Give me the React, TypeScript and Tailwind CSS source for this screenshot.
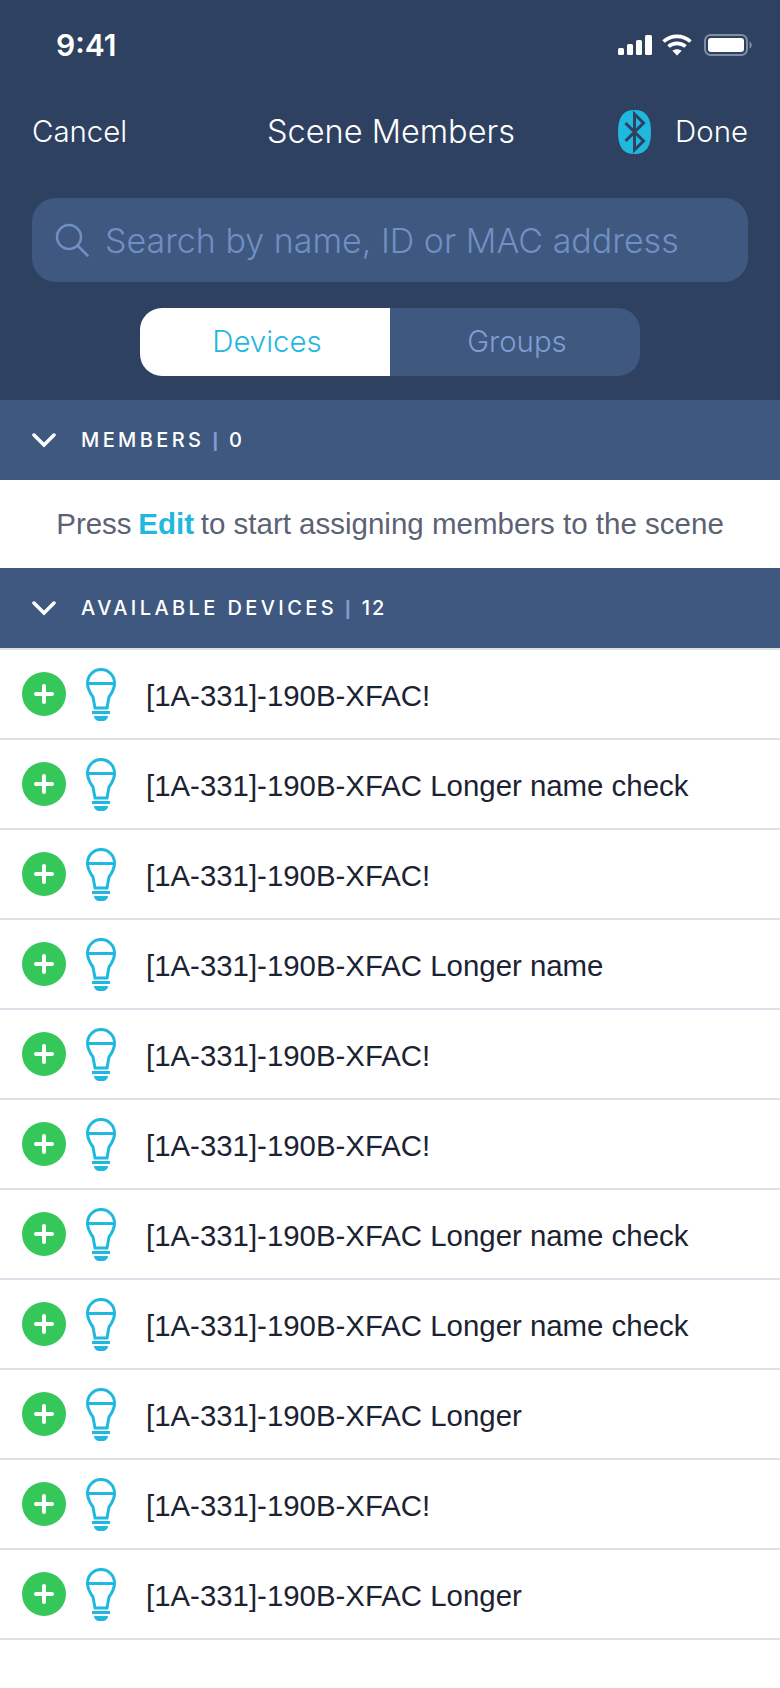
const devices = [
  "[1A-331]-190B-XFAC!",
  "[1A-331]-190B-XFAC Longer name check",
  "[1A-331]-190B-XFAC!",
  "[1A-331]-190B-XFAC Longer name",
  "[1A-331]-190B-XFAC!",
  "[1A-331]-190B-XFAC!",
  "[1A-331]-190B-XFAC Longer name check",
  "[1A-331]-190B-XFAC Longer name check",
  "[1A-331]-190B-XFAC Longer",
  "[1A-331]-190B-XFAC!",
  "[1A-331]-190B-XFAC Longer",
];

function StatusIcons() {
  return (
    <div className="-mr-[4px] flex items-center">
      <svg width="34" height="20" viewBox="0 0 34 20" fill="#fff">
        <rect x="0" y="13" width="6" height="7" rx="1.5" />
        <rect x="9" y="9" width="6" height="11" rx="1.5" />
        <rect x="18" y="5" width="6" height="15" rx="1.5" />
        <rect x="27" y="0" width="7" height="20" rx="1.5" />
      </svg>
      <svg className="ml-[10px]" width="30" height="22" viewBox="0 0 30 22" fill="none" stroke="#fff" strokeWidth="3.6">
        <path d="M1.500 7.500C9 .6 21 .6 28.500 7.500" />
        <path d="M6.500 12.500c4.600-4.200 12.400-4.200 17 0" />
        <path d="M15 21.500l-4.600-4.800c2.600-2 6.600-2 9.200 0z" fill="#fff" stroke="none" />
      </svg>
      <svg className="ml-[12px]" width="48" height="22" viewBox="0 0 48 22" fill="none">
        <rect x="1" y="1" width="42" height="20" rx="5.500" stroke="#fff" strokeOpacity="0.4" strokeWidth="2" />
        <rect x="4" y="4" width="36" height="14" rx="3" fill="#fff" />
        <path d="M45.500 7.500c1.400.5 2.300 2 2.300 3.500s-.9 3-2.300 3.500z" fill="#fff" fillOpacity="0.4" />
      </svg>
    </div>
  );
}

function BluetoothBadge() {
  return (
    <svg width="33" height="44" viewBox="0 0 33 44">
      <path d="M16.500 0C28 0 33 7 33 22s-5 22-16.500 22S0 37 0 22 5 0 16.500 0z" fill="#1fb8de" />
      <path d="M7.500 13l18 18-9 9V4l9 9-18 18" fill="none" stroke="#2e4161" strokeWidth="3" />
    </svg>
  );
}

function SectionBar({ title, count }: { title: string; count: number }) {
  return (
    <div className="flex h-20 items-center bg-[#3f587f] pl-[32px] text-white">
      <svg width="24" height="16" viewBox="0 0 24 16" fill="none" stroke="#fff" strokeWidth="3.500" strokeLinecap="round">
        <path d="M2 3l10 10L22 3" />
      </svg>
      <span className="ml-[25px] text-[20px] font-medium tracking-[0.17em]">{title}</span>
      <span className="ml-[8px] font-['Liberation_Sans',sans-serif] text-[20px] font-bold text-[#7d9ed2]">|</span>
      <span className="ml-[11px] text-[20px] font-medium tracking-[0.1em]">{count}</span>
    </div>
  );
}

function DeviceRow({ name }: { name: string }) {
  return (
    <div className="flex h-[90px] items-center border-b-2 border-[#dde2ea] pl-[22px]">
      <div className="flex h-11 w-11 items-center justify-center rounded-full bg-[#35c759]">
        <svg width="22" height="22" viewBox="0 0 22 22" stroke="#fff" strokeWidth="4" strokeLinecap="round">
          <path d="M11 3v16M3 11h16" />
        </svg>
      </div>
      <svg className="ml-[20px]" width="30" height="53" viewBox="0 0 30 53" fill="none" stroke="#1fb8de" strokeWidth="3">
        <path d="M9 40L7 29C4 25 1.500 21 1.500 15 1.500 7.500 7.500 1.500 15 1.500S28.500 7.500 28.500 15c0 6-2.500 10-5.500 14l-2 11z" />
        <path d="M3 15.500h24" />
        <path d="M6 44.500h18" />
        <path d="M8 48h14c0 2.800-2.500 5-5 5h-4c-2.500 0-5-2.200-5-5z" fill="#1fb8de" stroke="none" />
      </svg>
      <span className="ml-[30px] mt-[4px] font-['Liberation_Sans',sans-serif] text-[29.4px] text-[#1b2333]">{name}</span>
    </div>
  );
}

export default function App() {
  return (
    <div className="min-h-[1688px] bg-white font-['Inter',sans-serif]">
      <header className="h-[400px] bg-[#2e4161] px-[32px] text-white">
        <div className="flex h-[90px] items-center justify-between pl-[24px]">
          <span className="text-[30px] font-semibold">9:41</span>
          <StatusIcons />
        </div>
        <div className="flex h-[84px] items-center">
          <span className="flex-1 text-[29.4px] font-light">Cancel</span>
          <span className="ml-[2px] text-[32.500px] font-light">Scene Members</span>
          <div className="flex flex-1 items-center justify-end gap-[24px]">
            <BluetoothBadge />
            <span className="text-[29.4px] font-light">Done</span>
          </div>
        </div>
        <div className="mt-[24px] flex h-[84px] items-center gap-[16px] rounded-[24px] bg-[#3f587f] pl-[23px]">
          <svg width="34" height="34" viewBox="0 0 34 34" fill="none" stroke="#6f90c4" strokeWidth="2.500">
            <circle cx="14" cy="14" r="12" />
            <path d="M23 23l9.500 9.500" strokeLinecap="round" />
          </svg>
          <span className="text-[34px] font-light text-[#6f90c4]">Search by name, ID or MAC address</span>
        </div>
        <div className="mx-auto mt-[26px] flex h-[68px] w-[500px] overflow-hidden rounded-[22px] text-[29.4px] font-light">
          <div className="flex flex-1 items-center justify-center bg-white pl-[4px] text-[#1fb8de]">Devices</div>
          <div className="flex flex-1 items-center justify-center bg-[#3f587f] pl-[4px] text-[#7d9ed2]">Groups</div>
        </div>
      </header>

      <SectionBar title="MEMBERS" count={0} />
      <div className="flex h-[88px] items-center justify-center font-['Liberation_Sans',sans-serif] text-[29.5px] text-[#5b6274]">
        <span>
          Press <b className="-mx-[1.5px] text-[#1fb8de]">Edit</b> to start assigning members to the scene
        </span>
      </div>
      <SectionBar title="AVAILABLE DEVICES" count={12} />

      <div className="border-t-2 border-[#dde2ea]">
        {devices.map((name, i) => (
          <DeviceRow key={i} name={name} />
        ))}
      </div>
    </div>
  );
}
